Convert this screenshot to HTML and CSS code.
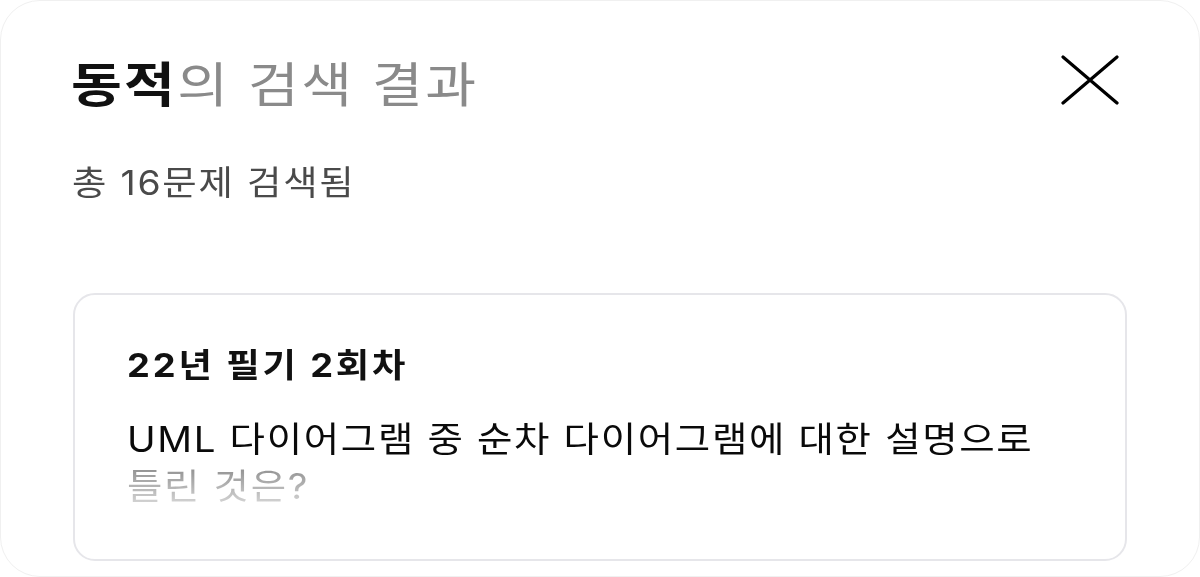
FILE: index.html
```html
<!DOCTYPE html>
<html lang="ko">
<head>
<meta charset="utf-8">
<link rel="stylesheet" href="styles.css">
</head>
<body>
<div class="modal">
  <header class="head">
    <h1 class="title"><strong>동적</strong>의 검색 결과</h1>
    <button class="close" aria-label="닫기">
      <svg width="58" height="50" viewBox="0 0 58 50"><path d="M2 2 L56 48 M56 2 L2 48" stroke="#000" stroke-width="3.2" stroke-linecap="round" fill="none"/></svg>
    </button>
  </header>
  <p class="count">총 16문제 검색됨</p>
  <article class="card">
    <h2 class="card-title">22년 필기 2회차</h2>
    <p class="card-text">UML 다이어그램 중 순차 다이어그램에 대한 설명으로<br><span class="fade">틀린 것은?</span></p>
  </article>
</div>
</body>
</html>
```
FILE: styles.css
```css
* { box-sizing: border-box; }
html, body { margin: 0; padding: 0; background: #fff; }
body {
  font-family: Inter, "Noto Sans CJK KR", "Noto Sans", sans-serif;
  width: 1200px;
  height: 577px;
  overflow: hidden;
}
.modal {
  width: 1200px;
  height: 577px;
  border: 1px solid #f0f0f0;
  border-radius: 40px;
  padding: 0 72px;
  overflow: hidden;
}
.title, .count, .card-title, .card-text {
  width: fit-content;
  transform-origin: left center;
}
.head {
  display: flex;
  justify-content: space-between;
  align-items: flex-start;
  padding-top: 48px;
}
.title {
  margin: 0 0 0 -2px;
  font-size: 48px;
  font-weight: 400;
  color: #8a8a8a;
  line-height: 72px;
  letter-spacing: 2px;
  transform: scaleX(1.15);
}
.title strong { color: #111; font-weight: 700; }
.close {
  border: 0;
  background: none;
  padding: 0;
  margin: 6px 8px 0 0;
  width: 58px;
  height: 50px;
  display: block;
  flex: none;
}
.close svg { display: block; }
.count {
  margin: 42px 0 0 -1px;
  font-size: 34px;
  line-height: 40px;
  color: #4a4a4a;
  letter-spacing: 1.6px;
  transform: scaleX(1.1);
}
.card {
  margin-top: 90px;
  border: 2px solid #e6e6ea;
  border-radius: 22px;
  height: 268px;
  padding: 50px 52px 0;
}
.card-title {
  margin: 0;
  font-size: 33px;
  font-weight: 700;
  color: #111;
  line-height: 40px;
  letter-spacing: 2.6px;
  transform: scaleX(1.1);
}
.card-text {
  margin: 31px 0 0;
  font-size: 35px;
  line-height: 47px;
  color: #0a0a0a;
  letter-spacing: 1.5px;
  white-space: nowrap;
  transform: scaleX(1.1);
}
.fade {
  background: linear-gradient(to bottom, #8c8c8c 0%, #dadada 100%);
  -webkit-background-clip: text;
  background-clip: text;
  color: transparent;
}
```
